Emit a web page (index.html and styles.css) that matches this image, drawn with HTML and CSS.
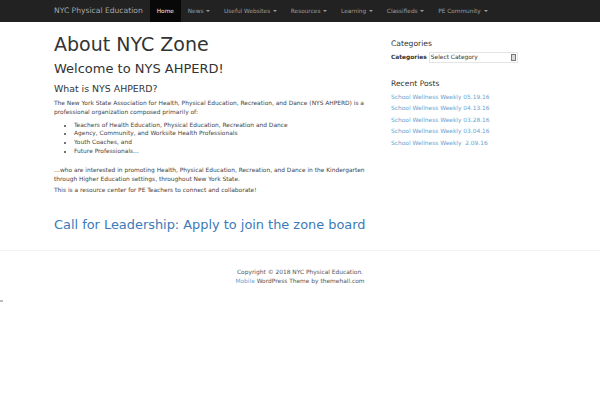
FILE: index.html
```html
<!DOCTYPE html>
<html>
<head>
<meta charset="utf-8">
<link rel="stylesheet" href="styles.css">
</head>
<body>
<div class="navbar">
  <div class="nav-inner">
    <span class="brand">NYC Physical Education</span>
    <ul class="nav">
      <li class="active">Home</li>
      <li>News <span class="caret"></span></li>
      <li>Useful Websites <span class="caret"></span></li>
      <li>Resources <span class="caret"></span></li>
      <li>Learning <span class="caret"></span></li>
      <li>Classifieds <span class="caret"></span></li>
      <li>PE Community <span class="caret"></span></li>
    </ul>
  </div>
</div>
<div class="content">
  <div class="main">
    <h1>About NYC Zone</h1>
    <h2>Welcome to NYS AHPERD!</h2>
    <h3>What is NYS AHPERD?</h3>
    <p>The New York State Association for Health, Physical Education, Recreation, and Dance (NYS AHPERD) is a professional organization composed primarily of:</p>
    <ul class="list">
      <li>Teachers of Health Education, Physical Education, Recreation and Dance</li>
      <li>Agency, Community, and Worksite Health Professionals</li>
      <li>Youth Coaches, and</li>
      <li>Future Professionals…</li>
    </ul>
    <p class="p2">…who are interested in promoting Health, Physical Education, Recreation, and Dance in the Kindergarten through Higher Education settings, throughout New York State.</p>
    <p>This is a resource center for PE Teachers to connect and collaborate!</p>
    <h2 class="link-title">Call for Leadership: Apply to join the zone board</h2>
  </div>
  <div class="sidebar">
    <h4 class="first">Categories</h4>
    <div class="cat-row">
      <span class="cat-label">Categories</span>
      <span class="select"><span class="sel-text">Select Category</span><span class="sel-btn"></span></span>
    </div>
    <h4 class="recent">Recent Posts</h4>
    <ul class="posts">
      <li>School Wellness Weekly 05.19.16</li>
      <li>School Wellness Weekly 04.13.16</li>
      <li>School Wellness Weekly 03.28.16</li>
      <li>School Wellness Weekly 03.04.16</li>
      <li>School Wellness Weekly &nbsp;2.09.16</li>
    </ul>
  </div>
</div>
<div class="footer">
  <div>Copyright © 2018 NYC Physical Education.</div>
  <div><span class="blue">Mobile</span> WordPress Theme by themehall.com</div>
</div>
<div class="dot"></div>
</body>
</html>
```
FILE: styles.css
```css
html, body { margin: 0; padding: 0; background: #fff; }
body { font-family: "DejaVu Sans", Verdana, sans-serif; color: #444; font-size: 5.9px; line-height: 9px; }
.navbar { background: #222; height: 22px; }
.nav-inner { display: flex; align-items: stretch; height: 22px; padding-left: 54px; }
.brand { color: #a8a8a8; font-size: 7.6px; line-height: 22px; margin-right: 7px; }
.nav { display: flex; list-style: none; margin: 0; padding: 0; }
.nav li { color: #9d9d9d; font-size: 5.8px; line-height: 22px; padding: 0 6.9px; }
.nav li.active { background: #080808; color: #f0f0f0; padding: 0 7px; }
.caret { display: inline-block; width: 0; height: 0; border-left: 2px solid transparent; border-right: 2px solid transparent; border-top: 2px solid #9d9d9d; vertical-align: middle; margin-left: 1px; }
.content { display: flex; justify-content: space-between; padding: 0 54px; height: 228px; border-bottom: 1px solid #f3f3f3; }
.main { width: 316px; }
.sidebar { width: 155px; }
h1 { font-size: 19px; font-weight: normal; line-height: 22px; margin: 11px 0 4.5px; color: #333; }
h2 { font-size: 13px; font-weight: normal; line-height: 17px; margin: 0 0 6.5px; color: #333; }
h3 { font-size: 9.4px; font-weight: normal; line-height: 12px; margin: 0 0 3.5px; color: #333; }
p { margin: 0; }
.p2 { margin-bottom: 1.5px; }
.list { margin: 4px 0 11px; padding-left: 20px; line-height: 8.7px; }
.link-title { color: #3a7ab8; margin: 22px 0 0; font-size: 12.9px; line-height: 16px; }
h4 { font-size: 7.6px; font-weight: normal; margin: 0 0 3px; line-height: 10px; color: #333; }
h4.first { margin-top: 17px; }
.cat-row { display: flex; align-items: center; height: 11px; }
.cat-label { font-weight: bold; margin-right: 2px; color: #333; }
.select { display: flex; width: 87px; height: 9px; border: 1px solid #e4e4e4; align-items: center; justify-content: space-between; }
.sel-text { color: #333; padding-left: 1px; }
.sel-btn { width: 5px; height: 7px; background: #d8d8d8; border: 1px solid #777; margin-right: 1px; box-sizing: border-box; }
.recent { margin-top: 16px; }
.posts { list-style: none; margin: 0; padding: 0; color: #6a9fd0; line-height: 11.4px; }
.footer { text-align: center; padding-top: 17px; line-height: 9px; color: #555; }
.blue { color: #6a9fd0; }
.dot { position: absolute; left: 0; top: 300px; width: 3px; height: 2px; background: #bbb; }
```
